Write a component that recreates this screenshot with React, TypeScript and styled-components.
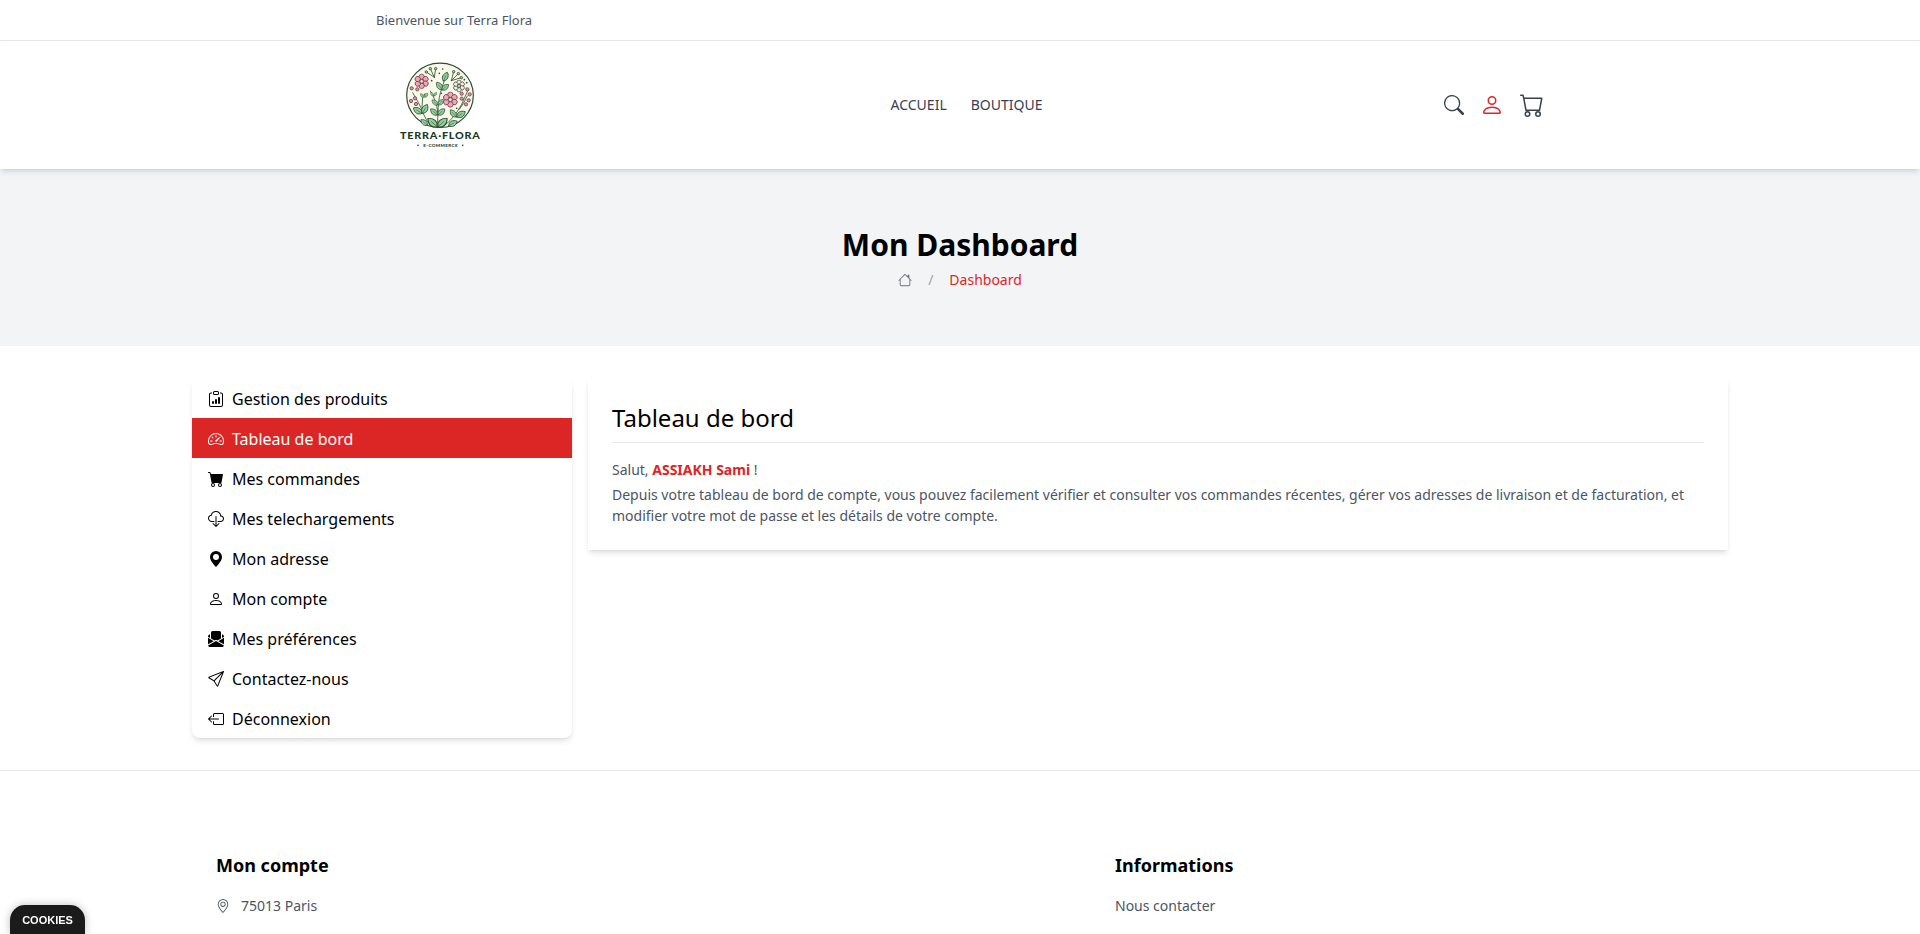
import React from 'react';
import styled, { createGlobalStyle } from 'styled-components';
import {
  BsSearch, BsPerson, BsCart, BsHouse, BsClipboardData, BsSpeedometer2, BsCartFill,
  BsCloudDownload, BsGeoAltFill, BsEnvelopePaperFill, BsSend, BsBoxArrowLeft, BsGeoAlt,
} from 'react-icons/bs';

const GlobalStyle = createGlobalStyle`
  *, *::before, *::after { box-sizing: border-box; }
  html, body { margin: 0; height: 100%; overflow: hidden; background: #fff; }
  body { font-family: 'Noto Sans', sans-serif; font-size: 16px; line-height: 24px; color: #000; }
  h1, h2, h3, p, ul { margin: 0; padding: 0; list-style: none; }
  a { color: inherit; text-decoration: none; }
  svg { display: block; flex-shrink: 0; }
`;

const cardShadow = '0 4px 6px -1px rgba(0, 0, 0, 0.1), 0 2px 4px -2px rgba(0, 0, 0, 0.1)';

const TopBar = styled.div`
  height: 41px;
  border-bottom: 1px solid #e5e7eb;
`;
const Narrow = styled.div`
  width: 1168px;
  height: 100%;
  margin: 0 auto;
  display: flex;
  align-items: center;
  justify-content: space-between;
`;
const Welcome = styled.p`
  font-size: 13px;
  line-height: 20px;
  color: #4b5563;
`;
const Header = styled.header`
  position: relative;
  height: 128px;
  background: #fff;
  box-shadow: ${cardShadow};
`;
const Nav = styled.nav`
  display: flex;
  gap: 24px;
  font-size: 14px;
  line-height: 20px;
  color: #374151;
`;
const Actions = styled.div`
  display: flex;
  align-items: center;
  gap: 16px;
  padding-left: 15px;
  color: #374151;
`;
const Action = styled.a<{ $active?: boolean }>`
  color: ${(p) => (p.$active ? '#dc2626' : 'inherit')};
`;
const Banner = styled.section`
  height: 177px;
  padding-top: 58px;
  background: #f3f4f6;
  display: flex;
  flex-direction: column;
  align-items: center;
`;
const Title = styled.h1`
  font-size: 30px;
  line-height: 36px;
  font-weight: 700;
`;
const Crumbs = styled.div`
  display: flex;
  align-items: center;
  gap: 16px;
  margin-top: 7px;
  font-size: 14px;
  line-height: 20px;
  color: #6b7280;
`;
const Slash = styled.span`
  color: #9ca3af;
`;
const Current = styled.span`
  color: #dc2626;
`;
const Main = styled.main`
  width: 1536px;
  margin: 0 auto;
  padding: 32px 0;
  display: grid;
  grid-template-columns: 380px 1fr;
  align-items: start;
  gap: 16px;
`;
const Menu = styled.ul`
  border-radius: 8px;
  box-shadow: ${cardShadow};
`;
const MenuItem = styled.li<{ $active?: boolean }>`
  height: 40px;
  padding: 9px 16px 7px;
  display: flex;
  align-items: center;
  gap: 8px;
  color: ${(p) => (p.$active ? '#fff' : '#000')};
  background: ${(p) => (p.$active ? '#dc2626' : 'transparent')};
`;
const Panel = styled.section`
  padding: 24px;
  box-shadow: ${cardShadow};
`;
const PanelTitle = styled.h2`
  padding-bottom: 8px;
  border-bottom: 1px solid #e5e7eb;
  font-size: 24px;
  line-height: 32px;
  font-weight: 400;
`;
const Text = styled.p<{ $top: number }>`
  margin-top: ${(p) => p.$top}px;
  font-size: 14px;
  line-height: 21px;
  color: #4b5563;
`;
const UserName = styled.strong`
  color: #dc2626;
`;
const Footer = styled.footer`
  border-top: 1px solid #e5e7eb;
`;
const FooterGrid = styled.div`
  width: 1536px;
  margin: 0 auto;
  padding: 80px 24px 0;
  display: grid;
  grid-template-columns: 899px 1fr;
`;
const FooterTitle = styled.h3`
  font-size: 18px;
  line-height: 28px;
  font-weight: 700;
`;
const FooterLine = styled.p`
  margin-top: 16px;
  display: flex;
  align-items: center;
  gap: 11px;
  font-size: 14px;
  line-height: 21px;
  color: #4b5563;
`;
const CookieTab = styled.button`
  position: fixed;
  left: 10px;
  bottom: 0;
  width: 75px;
  height: 29px;
  padding: 0;
  border: 0;
  border-radius: 15px 15px 0 0;
  background: #1b1b1b;
  color: #fff;
  font: 700 11px/31px 'Liberation Sans', sans-serif;
  box-shadow: 0 0 8px rgba(0, 0, 0, 0.25);
`;

const INK = '#2c4a2c';

function Leaf({ x, y, a, s = 1 }: { x: number; y: number; a: number; s?: number }) {
  return (
    <g transform={`translate(${x} ${y}) rotate(${a}) scale(${s})`}>
      <path d="M0 0C-12-8-12-21 0-32C12-21 12-8 0 0Z" fill="#90cf9f" stroke={INK} strokeWidth="2.5" />
      <path d="M0 2V-21" stroke={INK} strokeWidth="1.5" />
    </g>
  );
}

function Flower({ x, y, r, fill }: { x: number; y: number; r: number; fill: string }) {
  return (
    <g transform={`translate(${x} ${y})`} stroke="#4a3035" strokeWidth="2">
      {[0, 60, 120, 180, 240, 300].map((a) => (
        <circle key={a} transform={`rotate(${a})`} cx="0" cy={-r * 0.62} r={r * 0.36} fill={fill} />
      ))}
      <circle r={r * 0.25} fill="#d9efd2" />
    </g>
  );
}

const berries = [
  [107, 142], [124, 145], [105, 180], [120, 189], [117, 172],
  [274, 145], [257, 158], [281, 160], [278, 178], [257, 173], [270, 190],
];
const dots = [[200, 84], [190, 97], [167, 119], [196, 157], [265, 116], [272, 125], [242, 202]];

function Logo() {
  return (
    <svg width="128" height="128" viewBox="0 0 384 384" fill="none" role="img" aria-label="Terra Flora">
      <ellipse cx="192" cy="163" rx="100" ry="96.5" fill="#f8f9ea" stroke={INK} strokeWidth="3.5" />
      <g stroke={INK} strokeWidth="2.4" strokeLinecap="round">
        <path d="M184 258C187 220 183 180 198 140Q202 120 216 100M186 215Q180 175 163 150M170 258Q130 225 140 170L147 158M140 210Q128 185 110 155M201 258Q248 220 268 165L277 145M250 205Q262 190 274 165" />
        <path d="M175 109L151 93M175 109L163 83M175 109L179 83M226 119L233 92M226 119L247 98M226 119L256 110" />
      </g>
      <Leaf x={183} y={257} a={-48} s={1.15} />
      <Leaf x={186} y={257} a={48} s={1.15} />
      <Leaf x={184} y={222} a={-48} s={0.85} />
      <Leaf x={186} y={222} a={48} s={0.85} />
      <Leaf x={185} y={192} a={-48} s={0.7} />
      <Leaf x={187} y={192} a={42} s={0.7} />
      <Leaf x={202} y={120} a={25} s={0.9} />
      <Leaf x={198} y={146} a={-35} s={0.85} />
      <Leaf x={198} y={147} a={50} s={0.8} />
      <Leaf x={138} y={217} a={-58} s={0.95} />
      <Leaf x={139} y={217} a={30} s={0.95} />
      <Leaf x={240} y={228} a={-38} s={0.85} />
      <Leaf x={242} y={228} a={58} s={0.95} />
      <Leaf x={154} y={253} a={-48} s={0.8} />
      <Leaf x={218} y={254} a={62} s={0.9} />
      <Leaf x={144} y={169} a={-45} s={0.48} />
      <Leaf x={146} y={169} a={35} s={0.48} />
      <Leaf x={172} y={165} a={-35} s={0.42} />
      <Leaf x={174} y={165} a={35} s={0.42} />
      <Flower x={137} y={121} r={22} fill="#f7a3b8" />
      <Flower x={223} y={176} r={23} fill="#f7a3b8" />
      <Flower x={249} y={135} r={18} fill="#e8f4df" />
      {berries.map(([x, y]) => (
        <circle key={`${x}-${y}`} cx={x} cy={y} r="5" fill="#e48f9f" stroke="#4a3035" strokeWidth="2" />
      ))}
      {[[151, 93], [163, 83], [179, 83], [233, 92], [247, 98], [256, 110]].map(([x, y]) => (
        <circle key={x} cx={x} cy={y} r="3.8" fill="#a8bda0" stroke={INK} strokeWidth="2.2" />
      ))}
      {dots.map(([x, y]) => (
        <circle key={`${x}-${y}`} cx={x} cy={y} r="2.5" fill={INK} />
      ))}
      <text
        x="72" y="294" textLength="242" lengthAdjust="spacingAndGlyphs" letterSpacing="2"
        fontFamily="Lato, sans-serif" fontWeight="900" fontSize="28" fill="#1d3a1f"
      >
        TERRA·FLORA
      </text>
      <text
        x="142" y="317.5" textLength="104" lengthAdjust="spacingAndGlyphs" letterSpacing="1"
        fontFamily="Lato, sans-serif" fontWeight="900" fontSize="13" fill="#1d3a1f"
      >
        E-COMMERCE
      </text>
      <circle cx="126" cy="313" r="2.5" fill="#1d3a1f" />
      <circle cx="260" cy="313" r="2.5" fill="#1d3a1f" />
    </svg>
  );
}

const menu = [
  { icon: BsClipboardData, label: 'Gestion des produits' },
  { icon: BsSpeedometer2, label: 'Tableau de bord', active: true },
  { icon: BsCartFill, label: 'Mes commandes' },
  { icon: BsCloudDownload, label: 'Mes telechargements' },
  { icon: BsGeoAltFill, label: 'Mon adresse' },
  { icon: BsPerson, label: 'Mon compte' },
  { icon: BsEnvelopePaperFill, label: 'Mes préférences' },
  { icon: BsSend, label: 'Contactez-nous' },
  { icon: BsBoxArrowLeft, label: 'Déconnexion' },
];

export default function App() {
  return (
    <>
      <GlobalStyle />
      <TopBar>
        <Narrow>
          <Welcome>Bienvenue sur Terra Flora</Welcome>
        </Narrow>
      </TopBar>
      <Header>
        <Narrow>
          <Logo />
          <Nav>
            <a href="#">ACCUEIL</a>
            <a href="#">BOUTIQUE</a>
          </Nav>
          <Actions>
            <Action href="#"><BsSearch size={20} /></Action>
            <Action href="#" $active><BsPerson size={24} /></Action>
            <Action href="#"><BsCart size={24} /></Action>
          </Actions>
        </Narrow>
      </Header>
      <Banner>
        <Title>Mon Dashboard</Title>
        <Crumbs>
          <BsHouse size={14} />
          <Slash>/</Slash>
          <Current>Dashboard</Current>
        </Crumbs>
      </Banner>
      <Main>
        <Menu>
          {menu.map(({ icon: Icon, label, active }) => (
            <MenuItem key={label} $active={active}>
              <Icon size={16} />
              {label}
            </MenuItem>
          ))}
        </Menu>
        <Panel>
          <PanelTitle>Tableau de bord</PanelTitle>
          <Text $top={16}>
            Salut, <UserName>ASSIAKH Sami</UserName> !
          </Text>
          <Text $top={4}>
            Depuis votre tableau de bord de compte, vous pouvez facilement vérifier et consulter vos commandes
            récentes, gérer vos adresses de livraison et de facturation, et modifier votre mot de passe et les
            détails de votre compte.
          </Text>
        </Panel>
      </Main>
      <Footer>
        <FooterGrid>
          <div>
            <FooterTitle>Mon compte</FooterTitle>
            <FooterLine>
              <BsGeoAlt size={14} />
              75013 Paris
            </FooterLine>
          </div>
          <div>
            <FooterTitle>Informations</FooterTitle>
            <FooterLine>Nous contacter</FooterLine>
          </div>
        </FooterGrid>
      </Footer>
      <CookieTab>COOKIES</CookieTab>
    </>
  );
}
